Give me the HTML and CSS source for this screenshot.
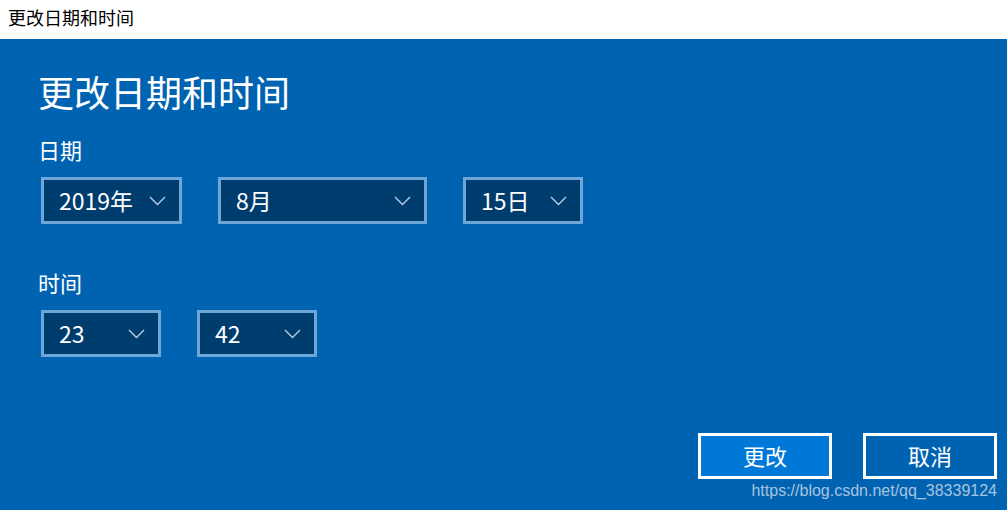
FILE: index.html
```html
<!DOCTYPE html>
<html lang="zh-CN">
<head>
<meta charset="utf-8">
<link rel="stylesheet" href="styles.css">
</head>
<body>
<div class="titlebar">更改日期和时间</div>
<div class="main">
  <h1 class="heading">更改日期和时间</h1>
  <div class="label label-date">日期</div>
  <div class="row">
    <div class="select w-year"><span>2019年</span><svg class="chev" width="17" height="10" viewBox="0 0 17 10"><polyline points="1,1 8.5,8.5 16,1" fill="none" stroke="#b9cde0" stroke-width="1.4"/></svg></div>
    <div class="select w-month"><span>8月</span><svg class="chev" width="17" height="10" viewBox="0 0 17 10"><polyline points="1,1 8.5,8.5 16,1" fill="none" stroke="#b9cde0" stroke-width="1.4"/></svg></div>
    <div class="select w-day"><span>15日</span><svg class="chev" width="17" height="10" viewBox="0 0 17 10"><polyline points="1,1 8.5,8.5 16,1" fill="none" stroke="#b9cde0" stroke-width="1.4"/></svg></div>
  </div>
  <div class="label label-time">时间</div>
  <div class="row">
    <div class="select w-time"><span>23</span><svg class="chev" width="17" height="10" viewBox="0 0 17 10"><polyline points="1,1 8.5,8.5 16,1" fill="none" stroke="#b9cde0" stroke-width="1.4"/></svg></div>
    <div class="select w-time"><span>42</span><svg class="chev" width="17" height="10" viewBox="0 0 17 10"><polyline points="1,1 8.5,8.5 16,1" fill="none" stroke="#b9cde0" stroke-width="1.4"/></svg></div>
  </div>
  <div class="buttons">
    <div class="btn btn-primary">更改</div>
    <div class="btn">取消</div>
  </div>
  <div class="watermark">https://blog.csdn.net/qq_38339124</div>
</div>
</body>
</html>
```
FILE: styles.css
```css
html, body {
  margin: 0;
  padding: 0;
  width: 1007px;
  height: 510px;
  overflow: hidden;
  font-family: "Noto Sans CJK SC", "Noto Sans", sans-serif;
}
.titlebar {
  height: 39px;
  background: #ffffff;
  color: #000000;
  font-size: 18px;
  line-height: 35px;
  padding-left: 8px;
  box-sizing: border-box;
}
.main {
  background: #0063b1;
  height: 471px;
  box-sizing: border-box;
  padding: 0 10px 0 38px;
  color: #ffffff;
  display: flex;
  flex-direction: column;
}
.heading {
  margin: 28px 0 0 0;
  font-size: 36px;
  font-weight: normal;
  line-height: 48px;
  height: 48px;
}
.label {
  font-size: 22px;
  line-height: 28px;
}
.label-date {
  margin-top: 20px;
}
.label-time {
  margin-top: 44px;
}
.row {
  display: flex;
  gap: 36px;
  margin-top: 14px;
  padding-left: 3px;
}
.select {
  box-sizing: border-box;
  height: 47px;
  border: 3px solid #6fa6d8;
  background: #003d6f;
  display: flex;
  align-items: center;
  justify-content: space-between;
  padding: 0 13px 0 15px;
  font-size: 23px;
}
.select span {
  line-height: 1;
}
.chev {
  display: block;
}
.w-year { width: 141px; }
.w-month { width: 209px; }
.w-day { width: 120px; }
.w-time { width: 120px; }
.buttons {
  margin-top: auto;
  display: flex;
  justify-content: flex-end;
  gap: 31px;
}
.btn {
  box-sizing: border-box;
  width: 134px;
  height: 46px;
  border: 3px solid #ffffff;
  display: flex;
  align-items: center;
  justify-content: center;
  font-size: 22px;
  line-height: 1;
  padding-bottom: 3px;
  color: #ffffff;
}
.btn-primary {
  background: #0078d7;
}
.watermark {
  align-self: flex-end;
  font-family: "Liberation Sans", Arial, sans-serif;
  font-size: 16px;
  line-height: 18px;
  color: #a8c3df;
  margin-top: 3px;
  margin-bottom: 10px;
}
```
